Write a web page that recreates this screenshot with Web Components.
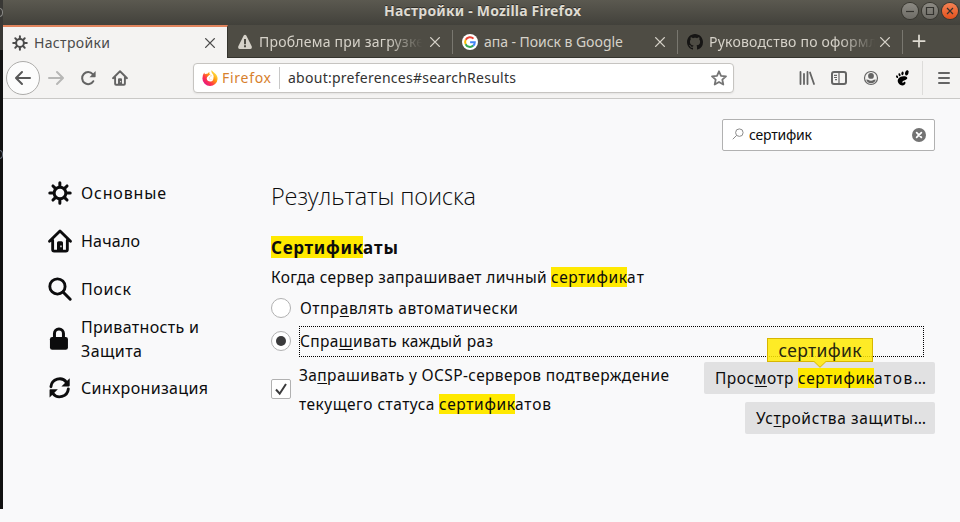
<!DOCTYPE html>
<html lang="ru">
<head>
<meta charset="utf-8">
<title>Настройки - Mozilla Firefox</title>
<style>
html,body{margin:0;height:522px;overflow:hidden;background:#f9f9fa}
body{font-family:"Noto Sans","Open Sans",sans-serif;color:#0c0c0d}
</style>
</head>
<body>
<browser-window></browser-window>
<script>
const define = (name, html, setup) => {
  const t = document.createElement('template');
  t.innerHTML = html;
  customElements.define(name, class extends HTMLElement {
    constructor() {
      super();
      this.attachShadow({mode: 'open'}).append(t.content.cloneNode(true));
    }
    connectedCallback() { if (setup) setup(this, this.shadowRoot); }
  });
};

/* Text run that is tracked to occupy the given width. */
const runs = new Set();
define('fit-text', `<style>
:host{display:inline-block;white-space:pre;line-height:20px;flex:none}
:host([mark]){background:#ffe900}
:host([fade]){-webkit-mask-image:linear-gradient(90deg,#000 78%,transparent 99%);mask-image:linear-gradient(90deg,#000 78%,transparent 99%)}
span{display:inline-block}
::slotted(u){text-decoration-thickness:1px;text-underline-offset:2px;text-decoration-skip-ink:none}
</style><span><slot></slot></span>`, el => runs.add(el));
const fitRuns = () => runs.forEach(el => {
  const s = el.shadowRoot.querySelector('span'), w = +el.getAttribute('w');
  s.style.letterSpacing = '0px';
  s.style.letterSpacing = (w - s.getBoundingClientRect().width) / (el.textContent.length - 1) + 'px';
  el.style.width = w + 'px';
});

const gear = `<circle cx="8" cy="8" r="3.9" fill="none" stroke="currentColor" stroke-width="2"/><path fill="none" stroke="currentColor" stroke-width="2" stroke-linecap="round" d="M7.900 1.200v2.400M7.900 12.400v2.400M1.200 8h2.400M12.400 8h2.400M3.300 3.300l1.300 1.300M11.400 11.400l1.300 1.300M3.300 12.700l1.300-1.300M11.400 4.600l1.300-1.300"/>`;
const home = `<path fill="none" stroke="currentColor" stroke-width="1.9" stroke-linecap="round" stroke-linejoin="round" d="M1 8.2L8 1.3l7 6.9M3.1 7.5v6.2q0 1 1 1h7.8q1 0 1-1V7.5"/><path fill="currentColor" fill-rule="evenodd" d="M6 15V9.2q0-1 1-1h2q1 0 1 1V15zM8.2 11v1.2h.9V11z"/>`;
const icons = {
  gear, home,
  close: `<path fill="none" stroke="currentColor" stroke-width="1.6" stroke-linecap="round" d="M3 3l10 10M13 3l-10 10"/>`,
  warn: `<path fill="currentColor" fill-rule="evenodd" d="M6.7 1.5q1.3-1.5 2.6 0l5.5 11q.7 2-1.4 2.5H2.600q-2.100-.5-1.400-2.500zM7 5v5.200h2V5zM7 11.300v1.900h2v-1.900z"/>`,
  google: `<circle cx="8" cy="8" r="8" fill="#fff"/><g fill="none" stroke-width="2"><path stroke="#ea4335" d="M3.700 5.800A4.900 4.900 0 0 1 11.500 4.600"/><path stroke="#fbbc05" d="M3.700 10.300A4.900 4.900 0 0 1 3.700 5.700"/><path stroke="#34a853" d="M11.300 11.600A4.900 4.900 0 0 1 3.600 10.200"/><path stroke="#4285f4" d="M8.100 8.200h4.700Q12.800 10.500 11.200 11.700"/></g>`,
  github: `<path fill="#161514" d="M8 0C3.580 0 0 3.580 0 8c0 3.540 2.290 6.530 5.470 7.590.4.070.55-.17.55-.38 0-.19-.01-.82-.01-1.490-2.010.370-2.530-.490-2.690-.940-.09-.230-.480-.940-.820-1.130-.280-.150-.680-.520-.010-.530.630-.010 1.080.580 1.230.820.720 1.210 1.870.870 2.330.660.070-.520.280-.870.510-1.070-1.780-.200-3.640-.890-3.640-3.950 0-.870.310-1.590.820-2.150-.080-.200-.360-1.020.080-2.120 0 0 .670-.210 2.200.820.640-.180 1.320-.270 2-.270s1.360.090 2 .270c1.530-1.040 2.200-.820 2.200-.820.440 1.100.160 1.920.080 2.120.510.560.820 1.270.820 2.150 0 3.070-1.870 3.750-3.650 3.950.290.250.540.730.540 1.480 0 1.070-.010 1.930-.010 2.200 0 .210.150.460.550.380A8.010 8.010 0 0 0 16 8c0-4.420-3.580-8-8-8z"/>`,
  plus: `<path stroke="currentColor" stroke-width="2" stroke-linecap="round" d="M8 1.500v13M1.500 8h13"/>`,
  back: `<path fill="none" stroke="currentColor" stroke-width="2" stroke-linecap="round" stroke-linejoin="round" d="M15 8H1.200M7 2L1 8l6 6"/>`,
  fwd: `<path fill="none" stroke="currentColor" stroke-width="2" stroke-linecap="round" stroke-linejoin="round" d="M1 8h13.800M9 2l6 6-6 6"/>`,
  reload: `<path fill="none" stroke="currentColor" stroke-width="2" stroke-linecap="round" d="M13.300 11.200A6 6 0 1 1 12.700 4.200"/><path fill="currentColor" d="M15.600 1v5.600q0 .6-.6.6H9.500z"/>`,
  star: `<path fill="none" stroke="currentColor" stroke-width="1.800" stroke-linejoin="round" d="M8 1.300l2 4.500 5 .5-3.700 3.300 1 4.900L8 12l-4.300 2.500 1-4.900L1 6.300l5-.5z"/>`,
  library: `<path stroke="currentColor" stroke-width="1.800" stroke-linecap="round" d="M1.500 2v12M5 4v10M8.500 2v12M11 2.500l4 11.500"/>`,
  sidebar: `<rect x="1" y="2" width="14" height="12" rx="2" fill="none" stroke="currentColor" stroke-width="2"/><path stroke="currentColor" stroke-width="1.200" d="M8 2v12M3 5.300h3M3 7.500h3M4 9.700h2"/>`,
  account: `<circle cx="8" cy="8" r="6.500" fill="none" stroke="currentColor" stroke-width="1.200"/><circle cx="8" cy="5.900" r="2.900" fill="currentColor"/><path fill="currentColor" d="M3.200 9.500q1 0 2 .3Q8 11.600 10.800 9.800q1-.3 2-.3-.8 3.500-4.800 3.700-4-.2-4.800-3.700z"/>`,
  foot: `<g fill="#000" transform="translate(-.6 0)"><ellipse cx="12.400" cy="2.900" rx="1.700" ry="2.700" transform="rotate(20 12.400 2.900)"/><ellipse cx="8.100" cy="3.300" rx="1.100" ry="1.900" transform="rotate(5 8.100 3.300)"/><ellipse cx="5.100" cy="4.700" rx="1" ry="1.600" transform="rotate(-18 5.100 4.700)"/><ellipse cx="2.700" cy="6.700" rx=".9" ry="1.400" transform="rotate(-30 2.700 6.700)"/><path d="M9.200 6.300C4.900 6.300 2.300 9.500 3.700 12.500c1.600 3.700 6.900 4.100 7.400.6.100-1.300-1.300-1.700-2-.7-.4.800-1.400.5-1.200-.4.300-1.300 5-2 5-3.900 0-1.300-1.600-1.800-3.700-1.800z"/></g>`,
  menu: `<path stroke="currentColor" stroke-width="2" stroke-linecap="round" d="M3 3h10M3 8h10M3 13h10"/>`,
  glass: `<circle cx="9.800" cy="6.200" r="5" fill="none" stroke="currentColor" stroke-width="1.300"/><path stroke="currentColor" stroke-width="1.300" d="M6.200 9.800L1 15"/>`,
  clear: `<circle cx="8" cy="8" r="8" fill="#737373"/><path stroke="#fff" stroke-width="2" stroke-linecap="round" d="M5.300 5.300l5.400 5.400M10.700 5.300l-5.400 5.400"/>`,
  search: `<circle cx="6.300" cy="6.300" r="5.100" fill="none" stroke="currentColor" stroke-width="1.900"/><path stroke="currentColor" stroke-width="2" stroke-linecap="round" d="M10 10l4.800 4.800"/>`,
  lock: `<rect x="1.300" y="6.600" width="12" height="8.600" rx="1.500" fill="currentColor"/><path fill="none" stroke="currentColor" stroke-width="2" d="M4.300 8V4.400a3 3 0 0 1 6 0V8"/>`,
  sync: `<g transform="translate(.4 .5) scale(.92)"><path fill="none" stroke="currentColor" stroke-width="2.100" stroke-linecap="round" d="M1.700 7.200A6.300 6.300 0 0 1 13 4M14.300 8.800A6.300 6.300 0 0 1 3 12"/><path fill="currentColor" d="M15.300 1v5.400q0 .6-.6.600H9.300zM.7 15V9.600q0-.6.600-.6h5.400z"/></g>`,
  firefox: `<defs><linearGradient id="f" x1=".9" y1=".1" x2=".15" y2=".9"><stop offset="0" stop-color="#fff44f"/><stop offset=".4" stop-color="#ff980e"/><stop offset=".7" stop-color="#ff3647"/><stop offset="1" stop-color="#e31587"/></linearGradient></defs><path fill="url(#f)" d="M9.500 0q1.500 2 3 3 3.200 2.500 3.100 6A7.600 7.600 0 0 1 8 16 7.600 7.600 0 0 1 .4 8.400Q.3 5 2.300 2.500l.5 1.700Q4 3.500 5.500 3.800q.5-1.300 2-1.800-.5 1.300.3 2.600l2 .9q-.2 1-1.700 1.300l-1 1.500q.3 1.700 2.200 1.500 2.500-.4 2.400-3Q11.500 4.500 10.300 3.500 9 2 9.500 0z"/><path fill="#fff" d="M7.300 5.100l2.500.4q-.2 1-1.700 1.300L7 8.300q.3 1.500 2.300 1.200 1.500-.2 2-1.500.3 3.200-2.800 3.500-3.400.1-3.800-3 .1-1.500 1.300-2.200z"/>`
};
define('ui-icon', `<style>:host{display:block;width:16px;height:16px;flex:none}svg{display:block;width:100%;height:100%;overflow:visible}</style><svg viewBox="0 0 16 16"></svg>`,
  (el, r) => { r.querySelector('svg').innerHTML = icons[el.getAttribute('name')]; });

define('window-button', `<style>
:host{display:grid;place-items:center;box-sizing:border-box;width:16px;height:16px;border-radius:50%;background:linear-gradient(#8c8a83,#6e6c66);box-shadow:0 0 0 1px #37362f;color:#33322e}
:host([kind=close]){background:linear-gradient(#f58253,#e2511d)}
svg{width:16px;height:16px}
</style><svg viewBox="0 0 16 16" fill="none" stroke="currentColor" stroke-width="1.200"><path/></svg>`,
  (el, r) => r.querySelector('path').setAttribute('d', {min: 'M4 8.500h8', max: 'M4.500 4.500h7v7h-7z', close: 'M5 5l6 6M11 5l-6 6'}[el.getAttribute('kind')]));

define('title-bar', `<style>
:host{display:flex;height:25px;align-items:center;background:linear-gradient(#5b5950,#42413b);color:#dfdbd2;font:bold 14px/22px "Noto Sans",sans-serif}
.t{padding-left:381px;padding-top:1px;box-sizing:border-box;flex:1;height:25px;display:flex;align-items:flex-start;text-shadow:0 -1px #302f2a}
nav{display:flex;gap:4px;padding:0 2px 3px 0}
</style><div class="t"><fit-text w="197">Настройки - Mozilla Firefox</fit-text></div><nav><window-button kind="min"></window-button><window-button kind="max"></window-button><window-button kind="close"></window-button></nav>`);

define('browser-tab', `<style>
:host{display:flex;box-sizing:border-box;width:225px;height:32px;align-items:center;padding:1px 0 0 9px;color:#d6d2c9;font-size:14px;flex:none}
:host([active]){background:#f4f3f2;color:#4b4b4b;border-top:2px solid #e0845d;border-right:1px solid #34332d;height:33px;padding-top:0}
:host(:not([active]))::after{content:"";width:1px;height:24px;background:#79776f}
.i{margin-right:6px}.x{width:14px;height:14px;margin:0 10px 0 auto}
</style><ui-icon class="i"></ui-icon><slot></slot><ui-icon class="x" name="close"></ui-icon>`,
  (el, r) => { r.querySelector('.i').shadowRoot.querySelector('svg').innerHTML = icons[el.getAttribute('icon')]; });

define('tab-strip', `<style>
:host{display:flex;height:33px;box-sizing:border-box;background:#4e4c44;box-shadow:inset 0 -1px #34332d}
.p{width:14px;height:14px;margin:9px 0 0 9px;color:#dfdbd2}
</style>
<browser-tab active icon="gear"><fit-text w="76">Настройки</fit-text></browser-tab>
<browser-tab icon="warn"><fit-text w="165" fade>Проблема при загрузке</fit-text></browser-tab>
<browser-tab icon="google"><fit-text w="139">апа - Поиск в Google</fit-text></browser-tab>
<browser-tab icon="github"><fit-text w="168" fade>Руководство по оформл</fit-text></browser-tab>
<ui-icon class="p" name="plus"></ui-icon>`);

define('address-bar', `<style>
:host{display:flex;box-sizing:border-box;width:541px;height:30px;align-items:center;padding:0 6px 0 8px;border:1px solid #c6c4c1;border-radius:4px;background:#fff;font-size:14px;box-shadow:0 1px 2px #0001}
.b{color:#d7802c;margin-left:4px}i{width:1px;height:22px;background:#c8c8c8;margin:0 8px}.u{color:#333}
.s{margin-left:auto;color:#757575}
</style><ui-icon name="firefox"></ui-icon><fit-text class="b" w="49">Firefox</fit-text><i></i><fit-text class="u" w="228">about:preferences#searchResults</fit-text><ui-icon class="s" name="star"></ui-icon>`);

define('nav-bar', `<style>
:host{display:flex;box-sizing:border-box;height:41px;align-items:center;background:#f4f3f2;border-bottom:1px solid #c9c8c6;padding:0 8px 0 3px;color:#646464}
.c{display:grid;place-items:center;width:32px;height:32px;border:1px solid #adacaa;border-radius:50%;background:#fcfcfc;color:#585858}
.left{display:flex;gap:16px;margin-left:8px;align-items:center}
.f{color:#b7b7b6}
address-bar{margin-left:65px}
.right{display:flex;gap:16px;margin-left:auto;align-items:center}
.right i{width:1px;height:34px;background:#dddcda;margin:0 -3px 0 -5px}
</style>
<div class="c"><ui-icon name="back"></ui-icon></div>
<div class="left"><ui-icon class="f" name="fwd"></ui-icon><ui-icon name="reload"></ui-icon><ui-icon name="home"></ui-icon></div>
<address-bar></address-bar>
<div class="right"><ui-icon name="library"></ui-icon><ui-icon name="sidebar"></ui-icon><ui-icon name="account"></ui-icon><ui-icon name="foot"></ui-icon><i></i><ui-icon name="menu"></ui-icon></div>`);

define('search-field', `<style>
:host{display:flex;box-sizing:border-box;width:213px;height:32px;align-items:center;padding:0 8px;border:1px solid #b1b1b1;border-radius:2px;background:#fff;font-size:14px}
.g{width:12px;height:12px;color:#888;margin:-2px 5px 0 1px}.x{width:14px;height:14px;margin-left:auto}
</style><ui-icon class="g" name="glass"></ui-icon><fit-text w="63">сертифик</fit-text><ui-icon class="x" name="clear"></ui-icon>`);

define('nav-item', `<style>
:host{display:flex;height:48px;align-items:center;gap:9px;font-size:16px}
:host([tall]){height:51px}
div{display:flex;flex-direction:column;gap:4px}
ui-icon{width:24px;height:24px}
</style><ui-icon></ui-icon><div><slot></slot></div>`,
  (el, r) => { r.querySelector('ui-icon').shadowRoot.querySelector('svg').innerHTML = icons[el.getAttribute('icon')]; });

define('side-nav', `<style>:host{display:block;width:223px}</style>
<nav-item icon="gear"><fit-text w="85">Основные</fit-text></nav-item>
<nav-item icon="home"><fit-text w="59">Начало</fit-text></nav-item>
<nav-item icon="search"><fit-text w="50">Поиск</fit-text></nav-item>
<nav-item icon="lock" tall><fit-text w="118">Приватность и</fit-text><fit-text w="61">Защита</fit-text></nav-item>
<nav-item icon="sync"><fit-text w="127">Синхронизация</fit-text></nav-item>`);

define('radio-option', `<style>
:host{display:flex;align-items:center;height:34px}
.r{box-sizing:border-box;width:20px;height:20px;border:1px solid #b1b1b1;border-radius:50%;background:#fff;display:grid;place-items:center;margin-right:8px}
:host([checked]) .r{margin-top:-1px}
:host([checked]) .r::after{content:"";width:10px;height:10px;border-radius:50%;background:#3b3b3c}
:host([checked]){height:31px;margin-top:1px}
.l{padding-left:1px}
:host([checked]) .l{box-sizing:border-box;width:625px;height:31px;border:1px dotted #000;padding:4px 0 0}
</style><div class="r"></div><div class="l"><slot></slot></div>`);

define('check-option', `<style>
:host{display:flex;align-items:center;gap:8px}
.b{box-sizing:border-box;width:20px;height:20px;border:1px solid #b1b1b1;border-radius:2px;background:#fff;margin-top:-3px}
svg{display:block;width:18px;height:18px}
.l{line-height:29px;font-size:15.500px}
</style><div class="b"><svg viewBox="0 0 18 18"><path fill="none" stroke="#3b3b3c" stroke-width="2" d="M4 9.500l3.700 4.200L14 4"/></svg></div><div class="l"><slot></slot></div>`);

define('push-button', `<style>
:host{display:flex;box-sizing:border-box;height:32px;align-items:center;padding:0 9px 0 11px;background:#e1e1e2;border-radius:2px;position:relative}
</style><slot></slot>`);

define('search-tooltip', `<style>
:host{position:absolute;left:63px;top:-24px;box-sizing:border-box;width:106px;height:24px;display:flex;justify-content:center;align-items:center;background:rgba(255,233,0,.85);border:1px solid #d7b600;font-size:17.500px;color:#26260f}
svg{position:absolute;left:45px;top:22px;width:14px;height:7px}
</style><slot></slot><svg viewBox="0 0 14 7"><path fill="#ffe926" stroke="#d7b600" d="M.5 0L7 6.300 13.500 0"/></svg>`);

define('search-results', `<style>
:host{display:block;width:664px;font-size:15.500px;line-height:20px}
h1{margin:0;height:56px;box-sizing:border-box;padding-bottom:2px;display:flex;align-items:center;font:300 23.500px "Open Sans","Noto Sans",sans-serif}
h1 fit-text{line-height:32px}
h2{margin:0;padding-top:6px;height:32px;display:flex;align-items:center;font-size:17px}
h2 fit-text{line-height:22px;height:22px}
h2 fit-text{line-height:23px}
p{margin:0;height:28px;display:flex;align-items:center}
.row{display:flex;align-items:flex-start;justify-content:space-between;padding-top:4px}
.buttons{display:flex;flex-direction:column;align-items:flex-end;gap:8px;padding-top:1px}
</style>
<h1><fit-text w="205">Результаты поиска</fit-text></h1>
<h2><fit-text mark w="92">Сертифик</fit-text><fit-text w="35">аты</fit-text></h2>
<p><fit-text w="280">Когда сервер запрашивает личный </fit-text><fit-text mark w="76">сертифик</fit-text><fit-text w="17">ат</fit-text></p>
<radio-option><fit-text w="218">Отпр<u>а</u>влять автоматически</fit-text></radio-option>
<radio-option checked><fit-text w="193">Спра<u>ш</u>ивать каждый раз</fit-text></radio-option>
<div class="row">
<check-option><fit-text w="370">За<u>п</u>рашивать у OCSP-серверов подтверждение</fit-text><br><fit-text w="140">текущего статуса </fit-text><fit-text mark w="76">сертифик</fit-text><fit-text w="36">атов</fit-text></check-option>
<div class="buttons">
<push-button><fit-text w="83">Прос<u>м</u>отр </fit-text><fit-text mark w="76">сертифик</fit-text><fit-text w="52">атов…</fit-text><search-tooltip><fit-text w="83">сертифик</fit-text></search-tooltip></push-button>
<push-button><fit-text w="170">Ус<u>т</u>ройства защиты…</fit-text></push-button>
</div></div>`);

define('desktop-edge', `<style>
:host{display:block;width:3px;height:509px;overflow:hidden;background:linear-gradient(#393835 0 50px,#111 50px)}
i{display:block;box-sizing:border-box;width:7px;height:9px;border:1.500px solid #8b8b88;border-radius:50%;margin:8px 0 0 -4px}
i+i{border-color:#68707d;margin-top:133px}
</style><i></i><i></i>`);

define('browser-window', `<style>
:host{display:flex;width:960px;height:522px}
main{width:957px}
.page{padding:20px 25px 0 45px}
search-field{margin:0 0 18px auto}
.cols{display:flex}
</style><desktop-edge></desktop-edge><main><title-bar></title-bar><tab-strip></tab-strip><nav-bar></nav-bar>
<div class="page"><search-field></search-field><div class="cols"><side-nav></side-nav><search-results></search-results></div></div></main>`);
fitRuns();
</script>
</body>
</html>
